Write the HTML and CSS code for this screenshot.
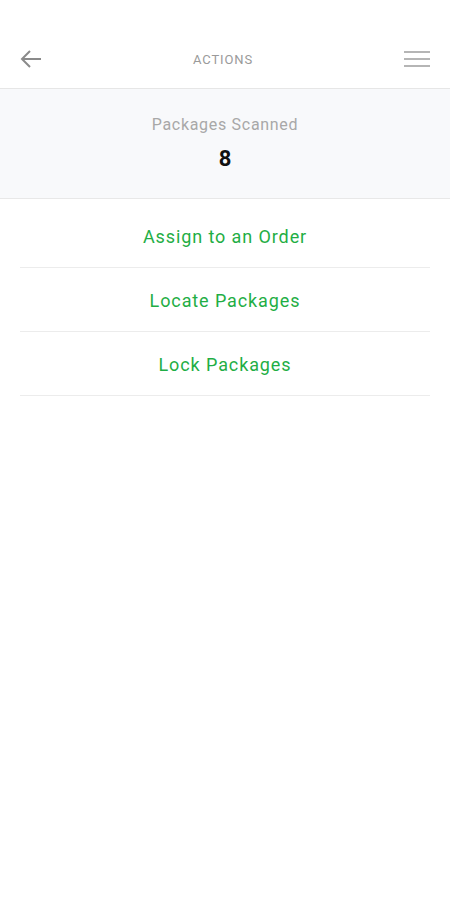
FILE: index.html
```html
<!DOCTYPE html>
<html lang="en">
<head>
    <meta charset="UTF-8">
    <meta name="viewport" content="width=device-width, initial-scale=1.0">
    <title>Actions</title>
    <link rel="stylesheet" href="styles.css">
</head>
<body>
    <header class="top-bar">
        <button class="icon-btn" aria-label="Back">
            <svg width="22" height="20" viewBox="0 0 22 20">
                <path d="M21 10H2M10 2L2 10l8 8" fill="none" stroke="#8a8a8a" stroke-width="2"/>
            </svg>
        </button>
        <h1 class="title">ACTIONS</h1>
        <button class="icon-btn" aria-label="Menu">
            <svg width="26" height="18" viewBox="0 0 26 18">
                <path d="M0 2h26M0 9h26M0 16h26" fill="none" stroke="#b5b5b5" stroke-width="2"/>
            </svg>
        </button>
    </header>

    <section class="summary">
        <div class="summary-label">Packages Scanned</div>
        <div class="summary-count">8</div>
    </section>

    <main class="action-list">
        <a class="action" href="#">Assign to an Order</a>
        <a class="action" href="#">Locate Packages</a>
        <a class="action" href="#">Lock Packages</a>
    </main>
</body>
</html>
```

FILE: styles.css
```css
body {
    margin: 0;
    font-family: Roboto, 'Noto Sans', sans-serif;
    background-color: #fff;
}
.top-bar {
    height: 89px;
    padding: 30px 20px 0;
    box-sizing: border-box;
    display: flex;
    align-items: center;
    justify-content: space-between;
    border-bottom: 1px solid #e6e6e6;
}
.icon-btn {
    background: none;
    border: none;
    padding: 0;
    display: flex;
    cursor: pointer;
}
.title {
    margin: 0;
    font-size: 13px;
    font-weight: 400;
    color: #9a9a9a;
    letter-spacing: 0.9px;
}
.summary {
    height: 110px;
    box-sizing: border-box;
    padding-top: 26px;
    background-color: #f8f9fb;
    border-bottom: 1px solid #e8e8e8;
    text-align: center;
}
.summary-label {
    font-size: 16px;
    color: #a8a8a8;
    line-height: 20px;
    letter-spacing: 0.7px;
}
.summary-count {
    margin-top: 11px;
    font-size: 22px;
    font-weight: 700;
    color: #111;
    line-height: 26px;
}
.action-list {
    margin: 0 20px;
    padding-top: 5px;
    display: flex;
    flex-direction: column;
}
.action {
    height: 64px;
    padding-top: 1px;
    box-sizing: border-box;
    display: flex;
    align-items: center;
    justify-content: center;
    border-bottom: 1px solid #ececec;
    color: #1fae45;
    font-size: 18px;
    letter-spacing: 0.9px;
    text-decoration: none;
}
```
